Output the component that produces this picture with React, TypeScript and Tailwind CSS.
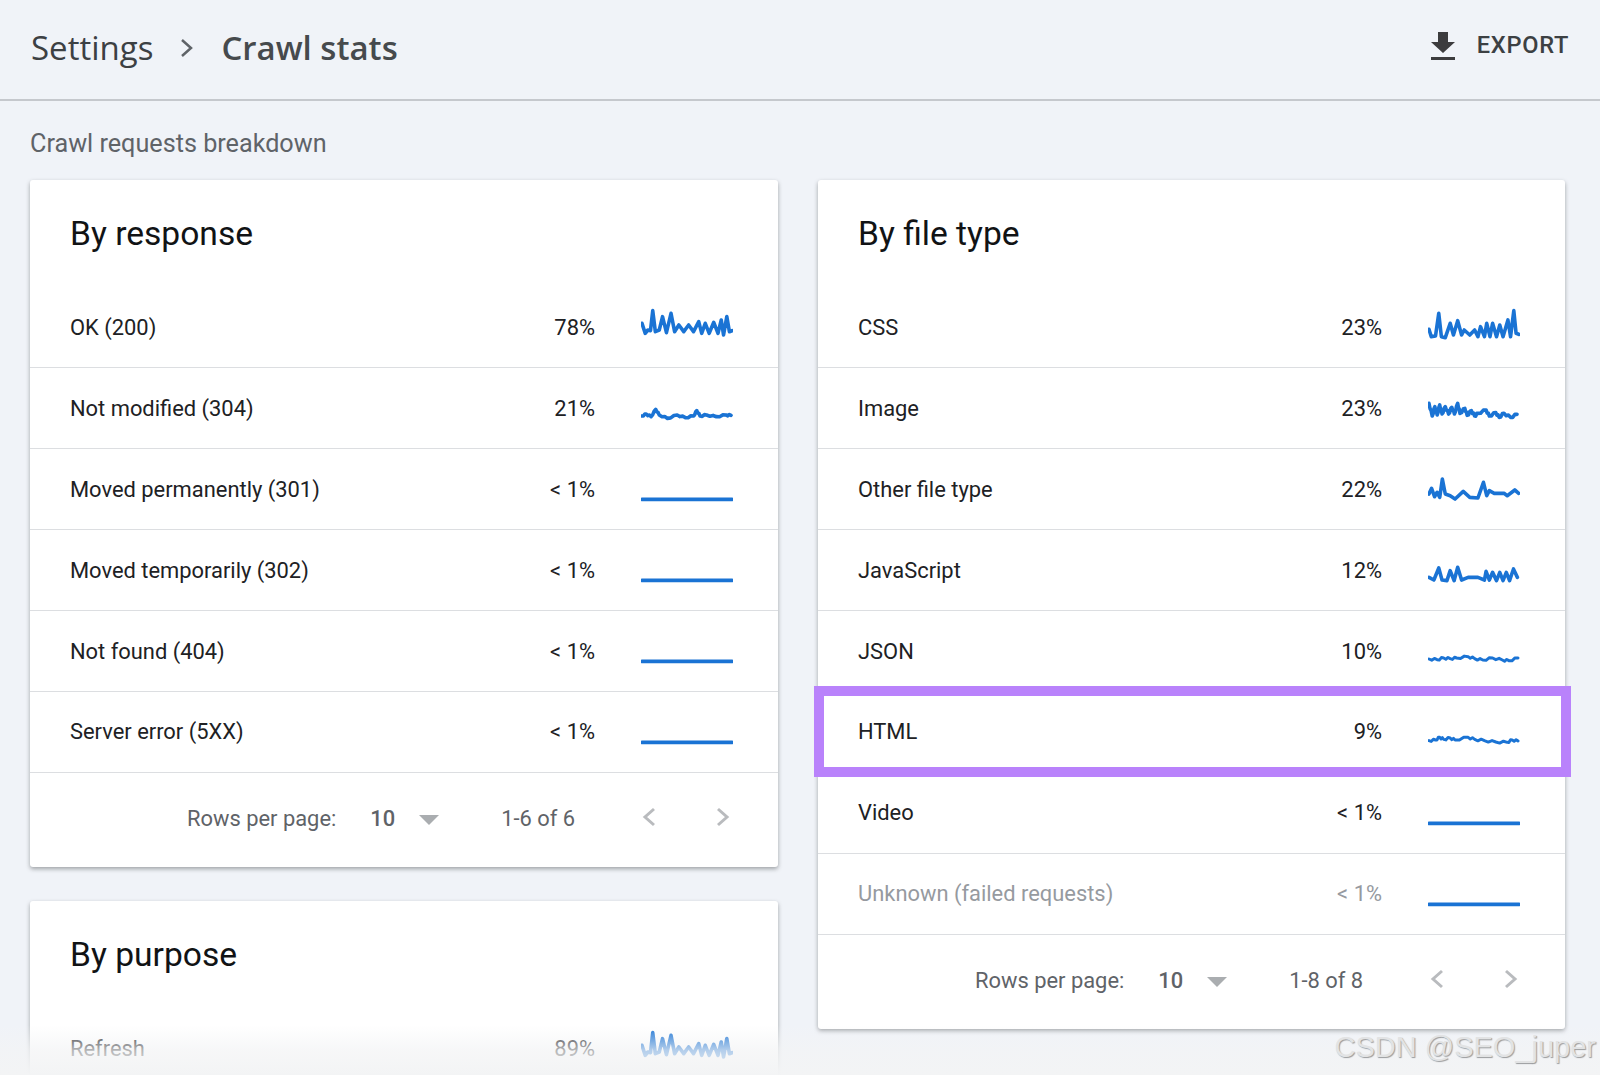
import React from "react";

type P = number[][];
const sx = (pts: P, dx: number, dy: number) => pts.map(([x, y]) => `${x - dx},${y - dy}`).join(" ");
const jit = (pts: P, a: number): P => {
  const out: P = [];
  pts.forEach(([x, y], i) => {
    out.push([x, y]);
    const n = pts[i + 1];
    if (n) {
      out.push([x + (n[0] - x) / 3, y + (n[1] - y) / 3 + a]);
      out.push([x + ((n[0] - x) * 2) / 3, y + ((n[1] - y) * 2) / 3 - a]);
    }
  });
  return out;
};

const spark = {
  ok: sx([[62,100],[72,130],[80,120],[88,122],[95,62],[103,125],[115,120],[125,80],[137,128],[151,70],[162,125],[175,105],[190,125],[205,105],[220,125],[236,95],[245,130],[256,100],[268,130],[282,97],[295,130],[305,90],[312,135],[322,80],[330,125],[338,122]], 59, 54),
  nm: sx(jit([[62,378],[75,372],[90,380],[104,358],[115,375],[140,385],[170,375],[195,383],[220,378],[230,362],[240,378],[260,375],[290,380],[320,375],[335,376]], 2), 59, 297),
  flat: "3,88 279,88",
  css: sx([[55,118],[62,140],[75,138],[85,70],[93,140],[105,143],[120,100],[130,135],[143,92],[155,135],[163,120],[180,135],[195,120],[205,140],[213,110],[225,140],[232,100],[242,140],[250,100],[262,140],[272,105],[282,140],[297,90],[305,140],[315,62],[322,130],[330,133]], 52, 54),
  img: sx(jit([[55,340],[65,378],[73,350],[80,375],[88,345],[95,372],[105,350],[115,372],[125,352],[133,372],[143,340],[150,370],[165,355],[172,376],[185,362],[195,378],[205,370],[230,360],[240,378],[260,368],[270,382],[285,370],[305,382],[325,373]], 3), 52, 297),
  other: sx([[55,100],[63,83],[72,108],[80,95],[88,110],[96,55],[105,100],[120,105],[135,115],[160,92],[180,110],[205,112],[222,65],[232,105],[240,90],[255,98],[285,98],[295,105],[318,88],[330,98]], 52, 28),
  js: sx([[55,350],[70,358],[85,322],[95,358],[110,360],[120,330],[132,360],[143,320],[155,358],[175,350],[205,350],[225,358],[230,332],[240,358],[250,335],[262,360],[272,335],[282,360],[292,335],[302,360],[314,325],[326,350]], 52, 271),
  json: sx(jit([[55,115],[80,117],[100,112],[120,114],[140,112],[175,108],[195,114],[220,118],[250,112],[280,118],[300,120],[328,112]], 3), 52, 34),
  html: sx(jit([[55,360],[75,358],[88,350],[100,356],[120,352],[135,358],[175,350],[195,356],[225,360],[260,364],[295,365],[310,358],[328,361]], 3), 52, 277),
};

function Spark({ points, w = 11 }: { points: string; w?: number }) {
  return (
    <svg viewBox="0 0 282 120" preserveAspectRatio="none" className="w-[92px] h-[40px] shrink-0">
      <polyline points={points} fill="none" stroke="#1a73d4" strokeWidth={w} strokeLinejoin="round" strokeLinecap="round" />
    </svg>
  );
}

function Row({ label, pct, points, w, muted, hl }: { label: string; pct: string; points: string; w?: number; muted?: boolean; hl?: boolean }) {
  return (
    <div className={`relative flex items-center h-[80.9px] pt-[2px] pl-10 pr-[45px] text-[21.9px] border-b border-[#dcdee1] ${muted ? "text-[#969a9f]" : "text-[#202124]"}`}>
      <span className="flex-1">{label}</span>
      <span>{pct}</span>
      <span className="ml-[46px] flex"><Spark points={points} w={w} /></span>
      {hl && <div className="absolute left-[-4px] right-[-6px] top-[-6px] bottom-[-5px] border-[10px] border-[#b982fb]" />}
    </div>
  );
}

function Footer({ total }: { total: string }) {
  return (
    <div className="flex items-center h-[94px] pl-[157px] text-[21.9px] text-[#5f6368]">
      <span>Rows per page:</span>
      <span className="ml-[34px] font-medium">10</span>
      <svg viewBox="0 0 20 10" className="ml-[24px] w-[20px] h-[10px] fill-[#aaadb0]"><path d="M0 0h20L10 10z" /></svg>
      <span className="ml-[62px] w-[100px]">{total}</span>
      <svg viewBox="0 0 14 20" className="ml-[41px] mt-[-6px] w-[14px] h-[20px] fill-none stroke-[#b9bbbe] stroke-[3]"><path d="M12 2L3 10l9 8" /></svg>
      <svg viewBox="0 0 14 20" className="ml-[60px] mt-[-6px] w-[14px] h-[20px] fill-none stroke-[#b9bbbe] stroke-[3]"><path d="M2 2l9 8-9 8" /></svg>
    </div>
  );
}

function Card({ title, children }: { title: string; children: React.ReactNode }) {
  return (
    <div className="bg-white rounded-[3px] shadow-[0_2px_4px_rgba(60,64,67,0.45)]">
      <div className="h-[107.5px] pl-10 pt-[32px] text-[33.6px] leading-[44px] text-[#111315]">{title}</div>
      {children}
    </div>
  );
}

export default function App() {
  return (
    <div className="relative h-[1075px] overflow-hidden bg-[#f0f3f8] font-['Roboto',sans-serif]">
      <header className="flex items-center justify-between h-[101px] pl-[31px] pr-[31px] border-b-2 border-[#c5c8cd]">
        <div className="flex items-center text-[33px] text-[#3c4043] font-['Open_Sans',sans-serif] mt-[-3px]">
          <span>Settings</span>
          <svg viewBox="0 0 14 20" className="ml-[27px] mr-[27px] w-[14px] h-[20px] fill-none stroke-[#5f6368] stroke-[2.5]"><path d="M2 2l9 8-9 8" /></svg>
          <span className="font-semibold text-[#464a4d]">Crawl stats</span>
        </div>
        <div className="flex items-center mt-[-7px]">
          <svg viewBox="0 0 24 28" className="w-[24px] h-[28px] fill-[#3c3c3e]"><path d="M7 0h10v10h7L12 21 0 10h7zM0 25h24v3H0z" /></svg>
          <span className="ml-[22px] mt-[-1px] text-[23.6px] tracking-[0.7px] font-medium text-[#3c4043]">EXPORT</span>
        </div>
      </header>
      <main className="pl-[30px] pr-[35px]">
        <h2 className="h-[79px] pt-[26px] text-[25.2px] leading-[34px] text-[#5f6368]">Crawl requests breakdown</h2>
        <div className="flex gap-[40px] items-start">
          <div className="w-[748px] flex flex-col gap-[34.5px]">
            <Card title="By response">
              <Row label="OK (200)" pct="78%" points={spark.ok} />
              <Row label="Not modified (304)" pct="21%" points={spark.nm} />
              <Row label="Moved permanently (301)" pct="< 1%" points={spark.flat} />
              <Row label="Moved temporarily (302)" pct="< 1%" points={spark.flat} />
              <Row label="Not found (404)" pct="< 1%" points={spark.flat} />
              <Row label="Server error (5XX)" pct="< 1%" points={spark.flat} />
              <Footer total="1-6 of 6" />
            </Card>
            <Card title="By purpose">
              <Row label="Refresh" pct="89%" points={spark.ok} />
            </Card>
          </div>
          <div className="w-[747px]">
            <Card title="By file type">
              <Row label="CSS" pct="23%" points={spark.css} />
              <Row label="Image" pct="23%" points={spark.img} />
              <Row label="Other file type" pct="22%" points={spark.other} />
              <Row label="JavaScript" pct="12%" points={spark.js} />
              <Row label="JSON" pct="10%" points={spark.json} w={9} />
              <Row label="HTML" pct="9%" points={spark.html} w={9} hl />
              <Row label="Video" pct="< 1%" points={spark.flat} />
              <Row label="Unknown (failed requests)" pct="< 1%" points={spark.flat} muted />
              <Footer total="1-8 of 8" />
            </Card>
          </div>
        </div>
      </main>
      <div className="absolute inset-x-0 bottom-0 h-[50px] bg-gradient-to-b from-[#f3f4f5]/0 via-[#f3f4f5]/70 to-[#f3f4f5]" />
      <div className="absolute right-[4px] bottom-[10px] text-[29px] leading-[36px] text-[#e2e3e4] font-['Liberation_Sans',sans-serif] [text-shadow:1px_1px_1px_#9a9c9e]">CSDN @SEO_juper</div>
    </div>
  );
}
